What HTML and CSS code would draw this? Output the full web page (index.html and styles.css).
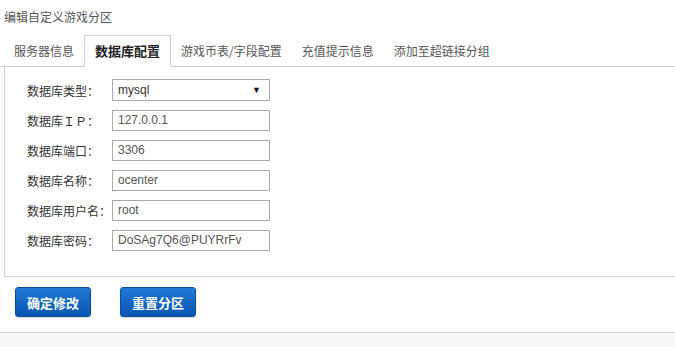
FILE: index.html
```html
<!DOCTYPE html>
<html lang="zh-CN">
<head>
<meta charset="utf-8">
<title>编辑自定义游戏分区</title>
<link rel="stylesheet" href="styles.css">
</head>
<body>
<div class="page">
  <div class="title">编辑自定义游戏分区</div>
  <ul class="tabs">
    <li class="tab">服务器信息</li>
    <li class="tab active">数据库配置</li>
    <li class="tab">游戏币表/字段配置</li>
    <li class="tab">充值提示信息</li>
    <li class="tab">添加至超链接分组</li>
  </ul>
  <div class="panel">
    <div class="row">
      <label class="label">数据库类型：</label>
      <div class="select"><span>mysql</span><span class="arrow">▼</span></div>
    </div>
    <div class="row">
      <label class="label">数据库ＩＰ：</label>
      <input class="field" type="text" value="127.0.0.1">
    </div>
    <div class="row">
      <label class="label">数据库端口：</label>
      <input class="field" type="text" value="3306">
    </div>
    <div class="row">
      <label class="label">数据库名称：</label>
      <input class="field" type="text" value="ocenter">
    </div>
    <div class="row">
      <label class="label">数据库用户名：</label>
      <input class="field" type="text" value="root">
    </div>
    <div class="row">
      <label class="label">数据库密码：</label>
      <input class="field" type="text" value="DoSAg7Q6@PUYRrFv">
    </div>
  </div>
  <div class="actions">
    <button class="btn" type="button">确定修改</button>
    <button class="btn" type="button">重置分区</button>
  </div>
  <div class="footer"></div>
</div>
</body>
</html>
```

FILE: styles.css
```css
html, body {
  margin: 0;
  padding: 0;
  background: #fff;
  overflow: hidden;
}
body {
  font-family: "Noto Sans CJK SC", "Liberation Sans", sans-serif;
  font-size: 12px;
  color: #333;
}
.page {
  width: 675px;
  height: 347px;
  display: flex;
  flex-direction: column;
}
.title {
  height: 35px;
  box-sizing: border-box;
  padding: 8px 0 0 4px;
  line-height: 18px;
  color: #555;
  font-size: 12px;
}
.tabs {
  list-style: none;
  margin: 0;
  padding: 0 0 0 4px;
  display: flex;
  border-bottom: 1px solid #cfcfcf;
  height: 31px;
}
.tab {
  padding: 0 10px;
  height: 31px;
  line-height: 31px;
  box-sizing: border-box;
  color: #555;
  font-size: 12px;
}
.tab.active {
  border: 1px solid #cfcfcf;
  border-bottom: none;
  background: #fff;
  color: #222;
  font-weight: bold;
  font-size: 13px;
  height: 32px;
  line-height: 30px;
  margin-bottom: -1px;
}
.panel {
  margin-left: 4px;
  border-left: 1px solid #cfcfcf;
  border-bottom: 1px solid #cfcfcf;
  padding: 12px 0 25px 22px;
  display: flex;
  flex-direction: column;
  gap: 8px;
}
.row {
  display: flex;
  align-items: center;
  height: 22px;
}
.label {
  width: 85px;
  flex: none;
  color: #333;
  font-size: 12px;
}
.field, .select {
  box-sizing: border-box;
  width: 158px;
  height: 22px;
  border: 1px solid #aaa;
  padding: 0 5px;
  font-family: "Liberation Sans", "Noto Sans CJK SC", sans-serif;
  font-size: 12px;
  color: #555;
  background: #fff;
  outline: none;
  margin: 0;
}
.row:not(:first-child) .field {
  height: 21px;
}
.select {
  display: flex;
  align-items: center;
  justify-content: space-between;
  color: #333;
  padding: 0 8px 0 5px;
}
.arrow {
  font-size: 9px;
  color: #111;
}
.actions {
  display: flex;
  gap: 29px;
  padding: 10px 0 0 15px;
  height: 55px;
  box-sizing: border-box;
}
.btn {
  width: 76px;
  height: 30px;
  border: 1px solid #0b4c9c;
  border-radius: 3px;
  background: linear-gradient(#1f7ad6, #0a56b2);
  color: #fff;
  font-family: "Noto Sans CJK SC", sans-serif;
  font-weight: bold;
  font-size: 13px;
  padding: 0;
  box-shadow: 0 1px 1px rgba(0,0,0,0.15);
}
.footer {
  flex: 1;
  border-top: 1px solid #d8d8d8;
  background: #f6f6f6;
}
```
